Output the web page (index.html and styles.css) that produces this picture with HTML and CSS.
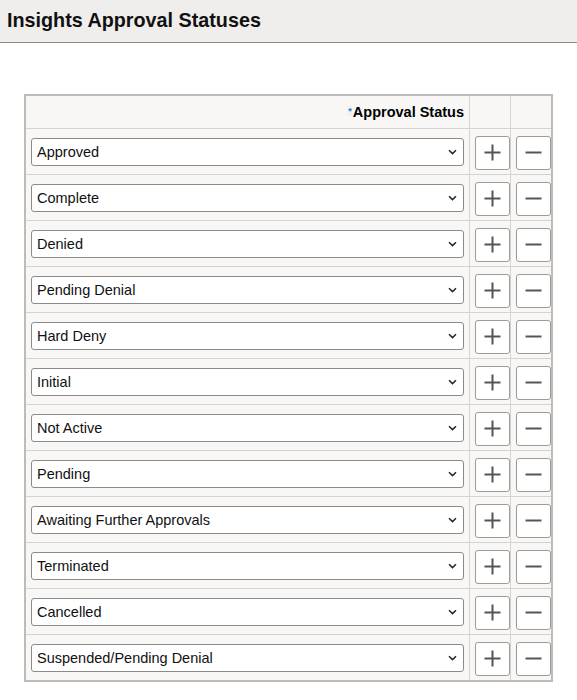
FILE: index.html
```html
<!DOCTYPE html>
<html>
<head>
<meta charset="utf-8">
<link rel="stylesheet" href="styles.css">
</head>
<body>
<div class="pagehead"><h1>Insights Approval Statuses</h1></div>
<main class="content">
<table class="grid">
<thead>
<tr><th class="colstatus"><span class="req">*</span>Approval Status</th><th class="colbtn"></th><th class="colbtn"></th></tr>
</thead>
<tbody id="rows"></tbody>
</table>
</main>
<script src="app.js"></script>
</body>
</html>
```
FILE: app.js
```js
var items = ["Approved","Complete","Denied","Pending Denial","Hard Deny","Initial","Not Active","Pending","Awaiting Further Approvals","Terminated","Cancelled","Suspended/Pending Denial"];
var tb = document.getElementById("rows");
var chevron = '<svg class="chev" width="9" height="6" viewBox="0 0 9 6"><path d="M1 1.2 L4.5 4.6 L8 1.2" fill="none" stroke="#2b2230" stroke-width="1.5"/></svg>';
var plus = '<svg width="17" height="17" viewBox="0 0 17 17"><path d="M8.5 0.5V16.5M0.5 8.5H16.5" stroke="#555" stroke-width="2"/></svg>';
var minus = '<svg width="17" height="17" viewBox="0 0 17 17"><path d="M0.5 8.5H16.5" stroke="#555" stroke-width="2"/></svg>';
items.forEach(function (t) {
  var tr = document.createElement("tr");
  tr.innerHTML = '<td class="colstatus"><div class="select"><span>' + t + '</span>' + chevron + '</div></td>' +
    '<td class="colbtn"><button class="btn" type="button">' + plus + '</button></td>' +
    '<td class="colbtn"><button class="btn" type="button">' + minus + '</button></td>';
  tb.appendChild(tr);
});
```
FILE: styles.css
```css
html, body { margin: 0; padding: 0; background: #fff; }
body { font-family: "Liberation Sans", Arial, sans-serif; color: #000; }
.pagehead {
  background: #efeeed;
  border-bottom: 1px solid #8c8a87;
  box-sizing: border-box;
  height: 43px;
}
.pagehead h1 {
  margin: 0;
  padding: 9px 0 0 7px;
  font-size: 19.75px;
  font-weight: bold;
  color: #111;
  line-height: 22px;
}
.content { padding: 51px 0 0 24px; }
.grid {
  border-collapse: collapse;
  border: 2px solid #bfbbb6;
  background: #f8f7f6;
  width: 529px;
}
.grid th, .grid td {
  border: 1px solid #d6d3cf;
  padding: 0;
}
.grid thead th {
  height: 32px;
  font-size: 14.5px;
  font-weight: bold;
  text-align: right;
  vertical-align: middle;
}
.grid th.colstatus { padding-right: 5px; }
.req { color: #2f7fd0; font-size: 9px; vertical-align: 3px; background: #f0f0f0; margin-right: 1px; }
.colbtn { width: 40px; }
.grid tbody td { height: 45px; }
.grid td.colstatus { padding: 0 5px 0 5px; }
.select {
  height: 28px;
  box-sizing: border-box;
  border: 1px solid #8e8a86;
  border-radius: 3px;
  background: #fff;
  display: flex;
  align-items: center;
  justify-content: space-between;
  padding: 0 6px 0 5px;
  font-size: 14.5px;
  color: #111;
}
.chev { display: block; margin-top: 1px; }
.grid tbody td.colbtn { text-align: right; padding: 2px 0 0 0; height: 43px; }
.btn {
  width: 35px;
  height: 34px;
  border: 1px solid #9e9a95;
  border-radius: 3px;
  background: #fff;
  padding: 0;
  display: inline-flex;
  align-items: center;
  justify-content: center;
  vertical-align: middle;
}
.btn svg { display: block; }
```
